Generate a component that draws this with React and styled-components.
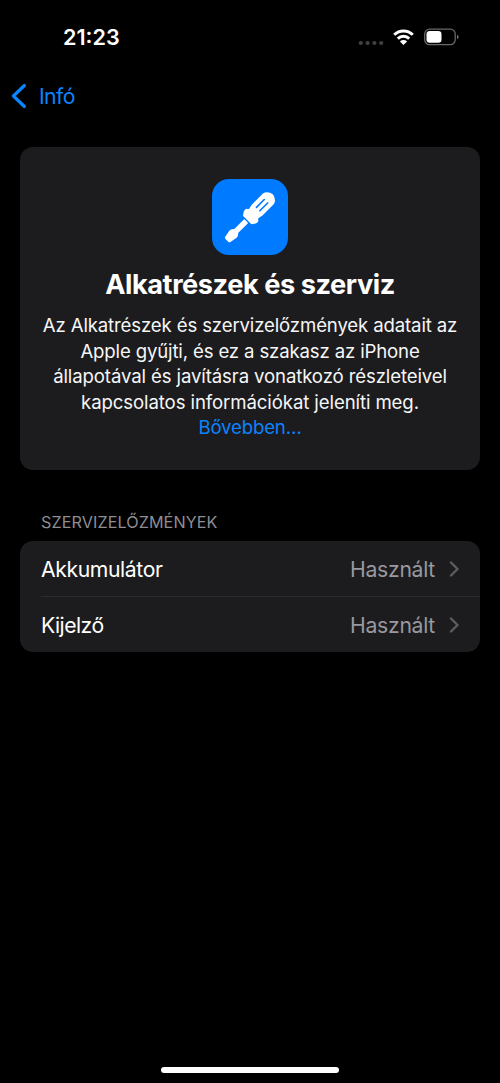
import React from 'react'
import styled, { createGlobalStyle } from 'styled-components'

const GlobalStyle = createGlobalStyle`
  * {
    box-sizing: border-box;
  }

  body {
    margin: 0;
    background: #000;
    color: #fff;
    font-family: Inter, "Liberation Sans", sans-serif;
  }
`;

const Screen = styled.div`
  width: 500px;
  height: 1083px;
  display: flex;
  flex-direction: column;
  background: #000;
  overflow: hidden;
`;

const StatusBar = styled.header`
  height: 74px;
  padding: 0 40px 0 63px;
  display: flex;
  align-items: center;
  justify-content: space-between;
`;

const Time = styled.span`
  font-size: 21.6px;
  font-weight: 600;
  letter-spacing: 0;
`;

const StatusIcons = styled.div`
  display: flex;
  align-items: center;
`;

const NavBar = styled.nav`
  height: 45px;
  padding-left: 11px;
  display: flex;
  align-items: center;
`;

const BackButton = styled.a`
  display: flex;
  align-items: center;
  gap: 12px;
  margin-top: -2px;
  color: #0a84ff;
  font-size: 21.2px;
  letter-spacing: -0.6px;
`;

const Content = styled.main`
  flex: 1;
  padding: 28px 20px 0;
`;

const Card = styled.section`
  height: 323px;
  padding-top: 32px;
  display: flex;
  flex-direction: column;
  align-items: center;
  border-radius: 13px;
  background: #1c1c1e;
`;

const AppIcon = styled.div`
  width: 76px;
  height: 76px;
  border-radius: 17px;
  background: #007aff;
`;

const Title = styled.h1`
  margin: 13px 0 0;
  font-size: 27.2px;
  line-height: 34px;
  font-weight: 700;
  letter-spacing: -0.45px;
  white-space: nowrap;
`;

const Desc = styled.p`
  margin: 11px 0 0;
  font-size: 18.6px;
  line-height: 25.5px;
  text-align: center;
  white-space: nowrap;
  letter-spacing: -0.1px;
  color: #f6f6f6;
`;

const Line = styled.span`
  display: block;
  letter-spacing: ${(props) => props.$spacing}px;
`;

const MoreLink = styled.a`
  display: block;
  letter-spacing: -0.15px;
  color: #0a84ff;
`;

const SectionTitle = styled.h2`
  margin: 42px 0 8px 21px;
  font-size: 16.2px;
  line-height: 21px;
  font-weight: 400;
  letter-spacing: 0.07px;
  color: #8d8d93;
`;

const List = styled.section`
  padding-left: 21px;
  border-radius: 13px;
  background: #1c1c1e;
`;

const Row = styled.div`
  height: ${(props) => (props.$divided ? 56 : 55)}px;
  padding: ${(props) => (props.$divided ? 0 : 1)}px 20px 0 0;
  display: flex;
  align-items: center;
  font-size: 21.2px;
  border-top: ${(props) => (props.$divided ? '1px solid #2b2b2e' : 'none')};
`;

const Label = styled.span`
  flex: 1;
  letter-spacing: ${(props) => props.$spacing}px;
`;

const Value = styled.span`
  margin-right: 14px;
  color: #98989f;
  letter-spacing: -0.3px;
`;

const HomeArea = styled.footer`
  height: 17px;
  display: flex;
  justify-content: center;
`;

const HomeIndicator = styled.div`
  width: 178px;
  height: 6px;
  margin-top: 0.5px;
  border-radius: 3px;
  background: #fff;
`;

const lines = [
  { text: 'Az Alkatrészek és szervizelőzmények adatait az', spacing: -0.14 },
  { text: 'Apple gyűjti, és ez a szakasz az iPhone', spacing: -0.15 },
  { text: 'állapotával és javításra vonatkozó részleteivel', spacing: -0.12 },
  { text: 'kapcsolatos információkat jeleníti meg.', spacing: -0.1 },
]

const parts = [
  { name: 'Akkumulátor', value: 'Használt', spacing: -0.4 },
  { name: 'Kijelző', value: 'Használt', spacing: -0.55 },
]

const StatusSymbols = () => (
  <svg width="102" height="22" viewBox="0 0 102 22">
    <g fill="#414143">
      <circle cx="2.8" cy="17" r="2.1" />
      <circle cx="9.6" cy="17" r="2.1" />
      <circle cx="16.4" cy="17" r="2.1" />
      <circle cx="23.2" cy="17" r="2.1" />
    </g>
    <g fill="none" stroke="#fff" strokeWidth="2.9">
      <path d="M36.2 8.8a13.2 13.2 0 0 1 18.6 0" />
      <path d="M39.8 12.6a8.1 8.1 0 0 1 11.4 0" />
    </g>
    <path d="M45.5 19l-3.6-3.6a5.2 5.2 0 0 1 7.2 0z" fill="#fff" />
    <rect x="66.7" y="3.2" width="30.5" height="15.4" rx="4.8" fill="none" stroke="#68686a" strokeWidth="1.3" />
    <rect x="68.5" y="5" width="15" height="11.8" rx="3.2" fill="#fff" />
    <path d="M99 8.8q1.6.6 1.6 2.2t-1.6 2.2z" fill="#727274" />
  </svg>
)

const Screwdriver = () => (
  <svg width="76" height="76" viewBox="0 0 76 76">
    <g transform="translate(14.7 61.5) rotate(-45)">
      <path
        fill="#fff"
        d="M.2-2.2Q.2-3.4 1.6-3.7L9-5Q10.4-5.2 11.4-4.4L13.6-2.8H26.6Q27.6-2.8 27.6-1.8V1.8Q27.6 2.8 26.6 2.8H13.6L11.4 4.4Q10.4 5.2 9 5L1.6 3.7Q.2 3.4.2 2.2ZM28.9-5Q28.9-6 29.8-6.6L32.6-8.5Q36-9.6 36.8-7.8Q37.3-6.6 39-6.7L43-7.6H58.5Q61-7.6 62.4-5.8L64.4-3Q66 0 64.4 3L62.4 5.8Q61 7.6 58.5 7.6H43L39 6.7Q37.3 6.6 36.8 7.8Q36 9.6 32.6 8.5L29.8 6.6Q28.9 6 28.9 5Z"
      />
      <path d="M44.5-2.4H55.5M44.5 2.4H55.5" stroke="#007aff" strokeWidth="1.6" strokeLinecap="round" />
    </g>
  </svg>
)

const Chevron = () => (
  <svg width="11" height="16" viewBox="0 0 11 16">
    <path d="M2 1.5L8.5 8L2 14.5" fill="none" stroke="#5d5d61" strokeWidth="2.4" strokeLinecap="round" strokeLinejoin="round" />
  </svg>
)

const App = () => {
  return (
    <Screen>
      <GlobalStyle />
      <StatusBar>
        <Time>21:23</Time>
        <StatusIcons>
          <StatusSymbols />
        </StatusIcons>
      </StatusBar>
      <NavBar>
        <BackButton>
          <svg width="16" height="26" viewBox="0 0 16 26">
            <path d="M13.4 2.5L2.4 13L13.4 23.5" fill="none" stroke="#0a84ff" strokeWidth="3.2" strokeLinecap="round" strokeLinejoin="round" />
          </svg>
          Infó
        </BackButton>
      </NavBar>
      <Content>
        <Card>
          <AppIcon>
            <Screwdriver />
          </AppIcon>
          <Title>Alkatrészek és szerviz</Title>
          <Desc>
            {lines.map((line) => (
              <Line key={line.text} $spacing={line.spacing}>{line.text}</Line>
            ))}
            <MoreLink>Bővebben…</MoreLink>
          </Desc>
        </Card>
        <SectionTitle>SZERVIZELŐZMÉNYEK</SectionTitle>
        <List>
          {parts.map((part, i) => (
            <Row key={part.name} $divided={i > 0}>
              <Label $spacing={part.spacing}>{part.name}</Label>
              <Value>{part.value}</Value>
              <Chevron />
            </Row>
          ))}
        </List>
      </Content>
      <HomeArea>
        <HomeIndicator />
      </HomeArea>
    </Screen>
  )
}

export default App
